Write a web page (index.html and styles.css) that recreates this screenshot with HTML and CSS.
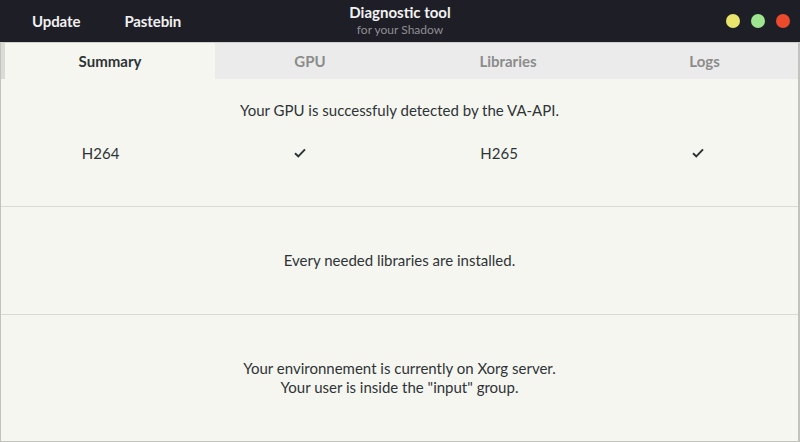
FILE: index.html
```html
<!DOCTYPE html>
<html>
<head>
<meta charset="utf-8">
<link rel="stylesheet" href="styles.css">
</head>
<body>
<div class="window">
  <header class="headerbar">
    <div class="hb-left">
      <span class="hb-btn">Update</span>
      <span class="hb-btn">Pastebin</span>
    </div>
    <div class="hb-title">
      <div class="title">Diagnostic tool</div>
      <div class="subtitle">for your Shadow</div>
    </div>
    <div class="hb-right">
      <span class="dot dot-min"></span>
      <span class="dot dot-max"></span>
      <span class="dot dot-close"></span>
    </div>
  </header>
  <nav class="tabs">
    <div class="tab active">Summary</div>
    <div class="tab">GPU</div>
    <div class="tab">Libraries</div>
    <div class="tab">Logs</div>
  </nav>
  <main class="content">
    <section class="row row-gpu">
      <p class="msg">Your GPU is successfuly detected by the VA-API.</p>
      <div class="codecs">
        <span>H264</span>
        <span class="check"><svg width="12" height="10" viewBox="0 0 12 10"><path d="M1 5.2 L4.3 8.4 L11 1.4" fill="none" stroke="#2e3436" stroke-width="2"/></svg></span>
        <span>H265</span>
        <span class="check"><svg width="12" height="10" viewBox="0 0 12 10"><path d="M1 5.2 L4.3 8.4 L11 1.4" fill="none" stroke="#2e3436" stroke-width="2"/></svg></span>
      </div>
    </section>
    <section class="row row-libs">
      <p class="msg">Every needed libraries are installed.</p>
    </section>
    <section class="row row-env">
      <p class="msg">Your environnement is currently on Xorg server.<br>Your user is inside the "input" group.</p>
    </section>
  </main>
</div>
</body>
</html>
```
FILE: styles.css
```css
* { box-sizing: border-box; }
html, body { margin: 0; padding: 0; }
body {
  width: 800px;
  height: 442px;
  overflow: hidden;
  font-family: Lato, "Noto Sans", sans-serif;
  color: #2e3436;
  background: #f6f6f1;
}
.window {
  width: 800px;
  height: 442px;
  display: flex;
  flex-direction: column;
}
.headerbar {
  height: 43px;
  flex: none;
  background: #1e1e27;
  border-bottom: 1px solid #cfcfcb;
  display: grid;
  grid-template-columns: 1fr auto 1fr;
  align-items: center;
  color: #f0f0f0;
}
.hb-left {
  display: flex;
  align-items: center;
  padding-left: 32px;
  gap: 44px;
  font-weight: 700;
  font-size: 15px;
  padding-bottom: 1px;
  letter-spacing: -0.1px;
}
.hb-title {
  text-align: center;
  line-height: 1;
  padding-bottom: 2px;
}
.title {
  font-weight: 700;
  font-size: 15px;
  color: #f2f2f2;
}
.subtitle {
  font-size: 12px;
  color: #8e8e94;
  margin-top: 4px;
}
.hb-right {
  display: flex;
  justify-content: flex-end;
  align-items: center;
  gap: 11px;
  padding-right: 10px;
  padding-bottom: 1px;
}
.dot {
  width: 14px;
  height: 14px;
  border-radius: 50%;
  display: block;
}
.dot-min { background: #e9e46c; }
.dot-max { background: #9de68f; }
.dot-close { background: #ec4a2c; }

.tabs {
  flex: none;
  height: 36px;
  display: grid;
  grid-template-columns: 210px 190px 206px 1fr;
  background: #ebebeb;
  border-left: 1px solid #c2c2bf;
  border-right: 2px solid #c2c2bf;
  padding-left: 4px;
  box-shadow: inset 5px 0 0 #dadad7;
}
.tab {
  display: flex;
  align-items: center;
  justify-content: center;
  font-weight: 700;
  font-size: 15px;
  color: #8b8b8b;
  padding-bottom: 1px;
}
.tab.active {
  background: #f6f6f1;
  color: #2e3436;
}
.content {
  flex: 1;
  display: flex;
  flex-direction: column;
  border-left: 1px solid #c2c2bf;
  border-right: 2px solid #c2c2bf;
  border-bottom: 1px solid #c2c2bf;
}
.row {
  display: flex;
  flex-direction: column;
  justify-content: center;
  align-items: center;
  font-size: 15px;
}
.row + .row { border-top: 1px solid #d9d9d5; }
.row-gpu { height: 127px; justify-content: flex-start; padding-top: 22px; }
.row-libs { height: 108px; }
.row-env { flex: 1; }
.msg {
  margin: 0;
  text-align: center;
  line-height: 19px;
}
.codecs {
  width: 100%;
  display: grid;
  grid-template-columns: repeat(4, 1fr);
  align-items: center;
  margin-top: 23px;
  text-align: center;
  height: 19px;
}
.check {
  display: flex;
  justify-content: center;
  align-items: center;
}
.check svg { display: block; }
```
